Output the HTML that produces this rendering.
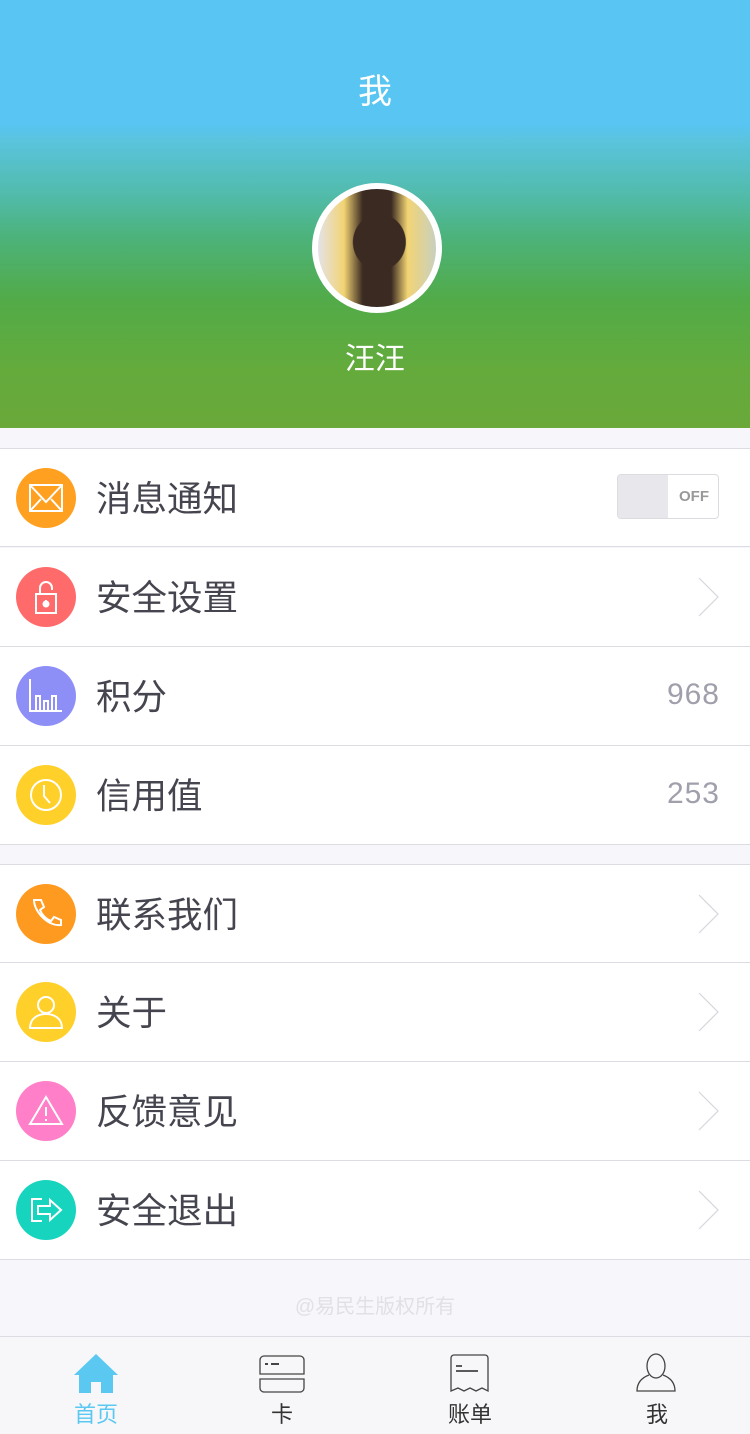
<!DOCTYPE html>
<html><head><meta charset="utf-8"><style>
*{margin:0;padding:0;box-sizing:border-box}
body{width:750px;height:1434px;background:#f7f7fb;font-family:"Liberation Sans","Noto Sans CJK SC",sans-serif;position:relative;overflow:hidden}
.hdr{position:absolute;left:0;top:0;width:750px;height:428px;background:linear-gradient(180deg,#58c5f2 0,#58c5f2 125px,#5ac4de 140px,#52bcb0 190px,#4cb278 240px,#52ab48 300px,#64ab3c 370px,#6aa83a 428px)}
.title{position:absolute;top:64px;width:750px;text-align:center;color:#fff;font-size:34px}
.av{position:absolute;left:312px;top:183px;width:130px;height:130px;border-radius:50%;background:#fff;padding:6px}
.av div{width:100%;height:100%;border-radius:50%;background:radial-gradient(ellipse at 52% 45%,#3a2a22 0,#3a2a22 30%,transparent 31%),linear-gradient(90deg,#e4e2e8 0,#f2d474 22%,#3a2a22 38%,#3a2a22 62%,#f2d474 76%,#c8d0c0 100%)}
.name{position:absolute;top:334px;width:750px;text-align:center;color:#fff;font-size:30px}
.row{position:absolute;left:0;width:750px;height:99px;background:#fff;border-bottom:1px solid #dcdce2}
.row.first{border-top:1px solid #dcdce2}
.ic{position:absolute;left:16px;top:19px;width:60px;height:60px;border-radius:50%}
.ic svg{position:absolute;left:0;top:0}
.lbl{position:absolute;left:96px;top:29px;font-size:35.5px;color:#45454f;line-height:42px}
.val{position:absolute;right:30px;top:31px;font-size:30px;color:#a0a0ac;letter-spacing:1px}
.arr{position:absolute;right:31px;top:29px}
.sw{position:absolute;left:617px;top:25px;width:102px;height:45px;border:1px solid #dcdce0;border-radius:4px;background:#fff;overflow:hidden}
.sw i{position:absolute;left:0;top:0;width:50px;height:100%;background:#e8e8ec}
.sw b{position:absolute;right:9px;top:13px;font-size:15px;color:#999;font-weight:bold}
.foot{position:absolute;top:1290px;width:750px;text-align:center;color:#e0e0e6;font-size:20px}
.tab{position:absolute;left:0;top:1336px;width:750px;height:98px;border-top:1px solid #dcdce2;background:#f7f7fa}
.t{position:absolute;top:60px;font-size:22px;color:#333;width:100px;text-align:center}
</style></head><body>
<div class="hdr"></div>
<div class="title">我</div>
<div class="av"><div></div></div>
<div class="name">汪汪</div>

<div class="row first" style="top:448px"><div class="ic" style="background:#ffa020"><svg width="60" height="60" viewBox="0 0 60 60" fill="none" stroke="#fff" stroke-width="2"><rect x="14" y="17" width="32" height="26"/><path d="M14 17l16 17 16-17M14 43l11-12M46 43l-11-12"/></svg></div><div class="lbl">消息通知</div><div class="sw"><i></i><b>OFF</b></div></div>
<div class="row" style="top:548px"><div class="ic" style="background:#ff6b6b"><svg width="60" height="60" viewBox="0 0 60 60" fill="none" stroke="#fff" stroke-width="2"><rect x="20" y="27" width="20" height="19"/><path d="M24 27v-6a6 6 0 0 1 12 0v2"/><circle cx="30" cy="37" r="2.5" fill="#fff"/><path d="M30 33v6"/></svg></div><div class="lbl">安全设置</div><svg class="arr" width="22" height="40" viewBox="0 0 22 40"><path d="M2 1l19 19-19 19" fill="none" stroke="#d6d6dc" stroke-width="1.2"/></svg></div>
<div class="row" style="top:647px"><div class="ic" style="background:#8d8ff7"><svg width="60" height="60" viewBox="0 0 60 60" fill="none" stroke="#fff" stroke-width="2"><path d="M14 13v32h32M20 45V30h4v15M28 45V35h4v10M36 45V30h4v15"/></svg></div><div class="lbl">积分</div><div class="val">968</div></div>
<div class="row" style="top:746px"><div class="ic" style="background:#ffd02a"><svg width="60" height="60" viewBox="0 0 60 60" fill="none" stroke="#fff" stroke-width="2"><circle cx="30" cy="30" r="15"/><path d="M28 20v11l6 7"/></svg></div><div class="lbl">信用值</div><div class="val">253</div></div>

<div class="row first" style="top:864px"><div class="ic" style="background:#ff9a20"><svg width="60" height="60" viewBox="0 0 60 60" fill="none" stroke="#fff" stroke-width="2"><path d="M20 16l5 0 3 7-4 3c2 5 6 9 11 11l3-4 7 3v5c-12 2-27-13-27-25z"/></svg></div><div class="lbl">联系我们</div><svg class="arr" width="22" height="40" viewBox="0 0 22 40"><path d="M2 1l19 19-19 19" fill="none" stroke="#d6d6dc" stroke-width="1.2"/></svg></div>
<div class="row" style="top:963px"><div class="ic" style="background:#ffd02a"><svg width="60" height="60" viewBox="0 0 60 60" fill="none" stroke="#fff" stroke-width="2"><circle cx="30" cy="23" r="8"/><path d="M14 46c0-9 7-14 16-14s16 5 16 14z"/></svg></div><div class="lbl">关于</div><svg class="arr" width="22" height="40" viewBox="0 0 22 40"><path d="M2 1l19 19-19 19" fill="none" stroke="#d6d6dc" stroke-width="1.2"/></svg></div>
<div class="row" style="top:1062px"><div class="ic" style="background:#ff7fc8"><svg width="60" height="60" viewBox="0 0 60 60" fill="none" stroke="#fff" stroke-width="2"><path d="M30 16l16 27H14z"/><path d="M30 26v9M30 38v2"/></svg></div><div class="lbl">反馈意见</div><svg class="arr" width="22" height="40" viewBox="0 0 22 40"><path d="M2 1l19 19-19 19" fill="none" stroke="#d6d6dc" stroke-width="1.2"/></svg></div>
<div class="row" style="top:1161px"><div class="ic" style="background:#17d4bf"><svg width="60" height="60" viewBox="0 0 60 60" fill="none" stroke="#fff" stroke-width="2"><path d="M26 19h-10v22h10M22 26h12v-6l11 10-11 10v-6H22z"/></svg></div><div class="lbl">安全退出</div><svg class="arr" width="22" height="40" viewBox="0 0 22 40"><path d="M2 1l19 19-19 19" fill="none" stroke="#d6d6dc" stroke-width="1.2"/></svg></div>

<div class="foot">@易民生版权所有</div>

<div class="tab">
<svg style="position:absolute;left:73px;top:16px" width="46" height="40" viewBox="0 0 46 40"><path d="M23 1L45 22h-5v18H28V29h-10v11H6V22H1z" fill="#5bc8f2"/></svg>
<div class="t" style="left:46px;color:#5bc8f2">首页</div>
<svg style="position:absolute;left:259px;top:18px" width="46" height="38" viewBox="0 0 46 38" fill="none" stroke="#444" stroke-width="1.3"><path d="M1 19V5a4 4 0 0 1 4-4h36a4 4 0 0 1 4 4v14zM1 24h44v9a4 4 0 0 1-4 4H5a4 4 0 0 1-4-4z"/><path d="M6 9h3M12 9h8" stroke-width="2"/></svg>
<div class="t" style="left:232px">卡</div>
<svg style="position:absolute;left:450px;top:17px" width="40" height="40" viewBox="0 0 40 40" fill="none" stroke="#444" stroke-width="1.3"><path d="M1 37V4a3 3 0 0 1 3-3h31a3 3 0 0 1 3 3v33l-6-3-6 3-6-3-6 3-6-3z"/><path d="M6 12h6M6 17h22" stroke-width="1.8"/></svg>
<div class="t" style="left:420px">账单</div>
<svg style="position:absolute;left:636px;top:16px" width="40" height="40" viewBox="0 0 40 40" fill="none" stroke="#444" stroke-width="1.3"><ellipse cx="20" cy="13" rx="9" ry="12"/><path d="M13 22c-8 3-12 8-12 16h38c0-8-4-13-12-16"/></svg>
<div class="t" style="left:607px">我</div>
</div>
</body></html>
